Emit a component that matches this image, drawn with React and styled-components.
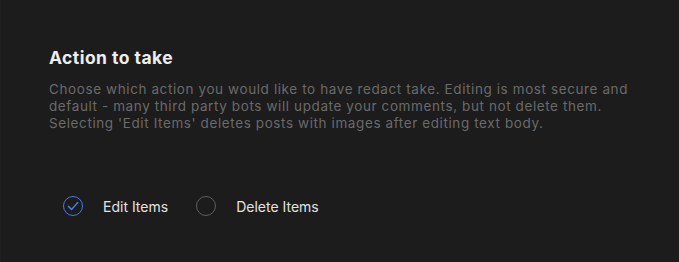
import React, { useState } from "react";
import styled, { createGlobalStyle } from "styled-components";

const GlobalStyle = createGlobalStyle`
  html, body {
    margin: 0;
    padding: 0;
    background: #1c1c1c;
  }
  body {
    font-family: Inter, "Noto Sans", sans-serif;
  }
`;

const Panel = styled.section`
  width: 679px;
  height: 262px;
  box-sizing: border-box;
  padding: 46px 48px 0;
  background: #1c1c1c;
  border-left: 1px solid #212121;
`;

const Title = styled.h2`
  margin: 0;
  font-size: 17.5px;
  font-weight: 650;
  letter-spacing: 0.45px;
  line-height: 24px;
  color: #ededed;
`;

const Description = styled.p`
  margin: 11px 0 0;
  font-size: 13.5px;
  line-height: 17px;
  letter-spacing: 0.6px;
  color: #6a6a6a;
  max-width: 590px;
`;

const Options = styled.div`
  display: flex;
  align-items: center;
  gap: 28px;
  margin-top: 64px;
  padding-left: 14px;
`;

const Option = styled.label`
  display: flex;
  align-items: center;
  gap: 20px;
  cursor: pointer;
  font-size: 14px;
  color: #e2e2e2;
`;

const Circle = styled.span`
  width: 20px;
  height: 20px;
  box-sizing: border-box;
  border-radius: 50%;
  border: 1.4px solid ${({ $checked }) => ($checked ? "#4a78e8" : "#5f5f5f")};
  display: flex;
  align-items: center;
  justify-content: center;
`;

const options = ["Edit Items", "Delete Items"];

export default function App() {
  const [selected, setSelected] = useState("Edit Items");

  return (
    <>
      <GlobalStyle />
      <Panel>
        <Title>Action to take</Title>
        <Description>
          Choose which action you would like to have redact take. Editing is
          most secure and default - many third party bots will update your
          comments, but not delete them. Selecting 'Edit Items' deletes posts
          with images after editing text body.
        </Description>
        <Options>
          {options.map((opt) => (
            <Option key={opt} onClick={() => setSelected(opt)}>
              <Circle $checked={selected === opt}>
                {selected === opt && (
                  <svg width="16" height="16" viewBox="0 0 16 16" fill="none">
                    <path
                      d="M3.4 8.4 L6.6 11.4 L12.8 4.6"
                      stroke="#4a78e8"
                      strokeWidth="1.5"
                      strokeLinecap="round"
                      strokeLinejoin="round"
                    />
                  </svg>
                )}
              </Circle>
              {opt}
            </Option>
          ))}
        </Options>
      </Panel>
    </>
  );
}
